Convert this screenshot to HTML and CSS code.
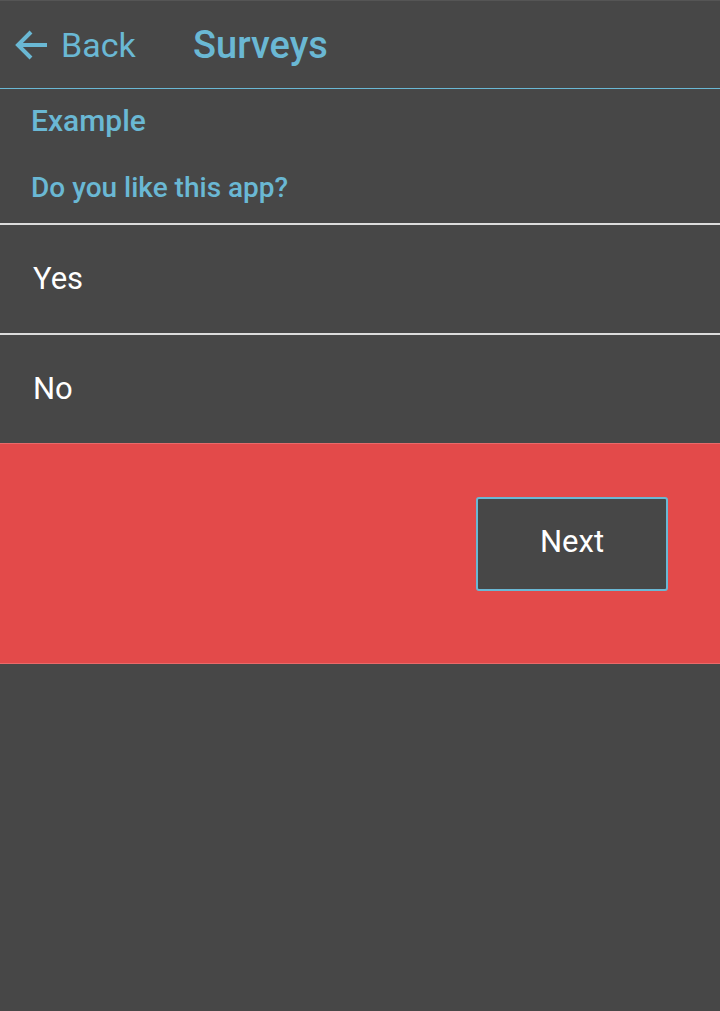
FILE: index.html
```html
<!DOCTYPE html>
<html>
<head>
<meta charset="utf-8">
<link rel="stylesheet" href="styles.css">
</head>
<body>
<div class="app">
  <header class="header">
    <div class="back">
      <svg class="back-icon" width="34" height="34" viewBox="0 0 34 34">
        <path d="M33 17 H4 M17 4 L4 17 L17 30" fill="none" stroke="#6ab8d4" stroke-width="4" stroke-linecap="butt" stroke-linejoin="miter"/>
      </svg>
      <span class="back-label">Back</span>
    </div>
    <h1 class="title">Surveys</h1>
  </header>
  <section class="intro">
    <div class="survey-name">Example</div>
    <div class="question">Do you like this app?</div>
  </section>
  <div class="option">Yes</div>
  <div class="option">No</div>
  <section class="footer">
    <button class="next">Next</button>
  </section>
</div>
</body>
</html>
```

FILE: styles.css
```css
html, body {
  margin: 0;
  padding: 0;
  background: #474747;
}
body {
  font-family: Roboto, "Noto Sans", sans-serif;
}
.app {
  width: 720px;
  min-height: 1011px;
  background: #474747;
  border-top: 1px solid #555;
  box-sizing: border-box;
}
.header {
  height: 88px;
  border-bottom: 1px solid #6ab8d4;
  display: flex;
  align-items: center;
  padding-left: 14px;
  box-sizing: border-box;
}
.back {
  display: flex;
  align-items: center;
  color: #6ab8d4;
  width: 179px;
}
.back-icon {
  display: block;
  margin-right: 13px;
}
.back-label {
  font-size: 34px;
  font-weight: 400;
}
.title {
  margin: 0;
  font-size: 38px;
  font-weight: 500;
  color: #6ab8d4;
}
.intro {
  padding: 15px 31px 18px;
  border-bottom: 2px solid #dcdcdc;
  color: #6ab8d4;
  font-weight: 500;
}
.survey-name {
  font-size: 30px;
  line-height: 34px;
}
.question {
  margin-top: 33px;
  font-size: 28px;
  line-height: 34px;
}
.option {
  height: 108px;
  display: flex;
  align-items: center;
  padding-left: 33px;
  padding-bottom: 2px;
  box-sizing: border-box;
  color: #ffffff;
  font-size: 31px;
  border-bottom: 2px solid #dcdcdc;
}
.option:last-of-type {
  height: 108px;
  border-bottom: none;
}
.option:first-of-type {
  height: 110px;
}
.footer {
  background: #e34a4a;
  border-top: 1px solid #ea6a6a;
  border-bottom: 1px solid #ea6a6a;
  height: 221px;
  box-sizing: border-box;
  display: flex;
  justify-content: flex-end;
  padding: 53px 52px 0 0;
}
.next {
  width: 192px;
  height: 94px;
  background: #474747;
  border: 2px solid #6ab8d4;
  border-radius: 3px;
  color: #ffffff;
  font-family: Roboto, "Noto Sans", sans-serif;
  font-size: 31px;
  padding: 0 0 6px;
}
```
